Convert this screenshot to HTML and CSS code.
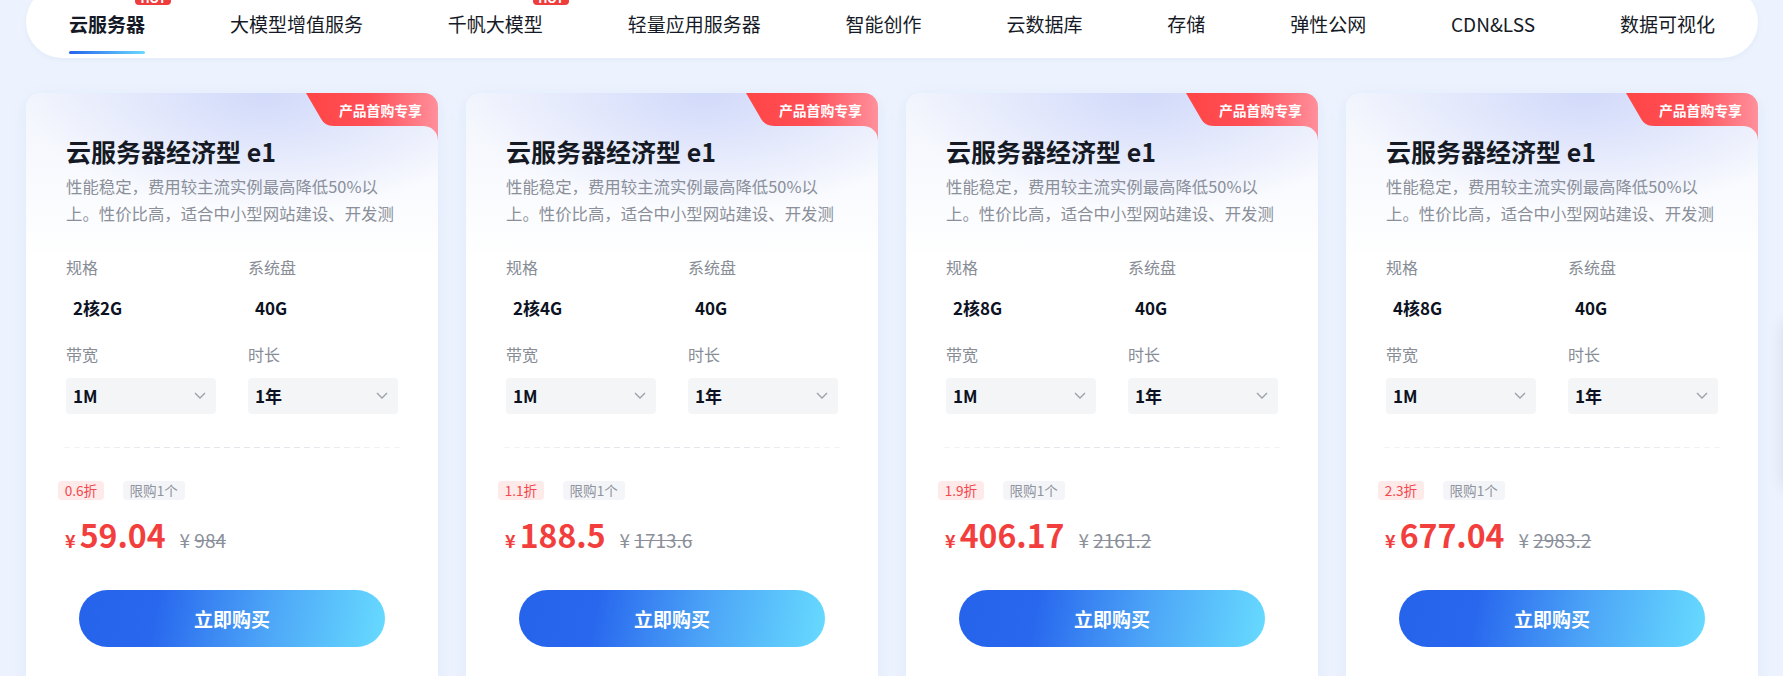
FILE: index.html
```html
<!DOCTYPE html>
<html lang="zh-CN">
<head>
<meta charset="utf-8">
<title>云服务器</title>
<link rel="stylesheet" href="styles.css">
</head>
<body>
<div class="page">
  <nav class="nav">
    <div class="nav-item active"><span class="nav-text">云服务器</span><span class="underline"></span><span class="hot">HOT</span></div>
    <div class="nav-item"><span class="nav-text">大模型增值服务</span></div>
    <div class="nav-item"><span class="nav-text">千帆大模型</span><span class="hot">HOT</span></div>
    <div class="nav-item"><span class="nav-text">轻量应用服务器</span></div>
    <div class="nav-item"><span class="nav-text">智能创作</span></div>
    <div class="nav-item"><span class="nav-text">云数据库</span></div>
    <div class="nav-item"><span class="nav-text">存储</span></div>
    <div class="nav-item"><span class="nav-text">弹性公网</span></div>
    <div class="nav-item"><span class="nav-text">CDN&amp;LSS</span></div>
    <div class="nav-item"><span class="nav-text">数据可视化</span></div>
  </nav>

  <div class="cards">
    <div class="card">
      <div class="badge">
        <svg class="badge-bg" viewBox="0 0 132 48" width="132" height="48"><defs><linearGradient id="bg1" x1="0" y1="0" x2="1" y2="0"><stop offset="0" stop-color="#ff4545"/><stop offset="0.5" stop-color="#ff5058"/><stop offset="1" stop-color="#ff909c"/></linearGradient></defs><path d="M0 0 H132 V48 C132 39 126 33 116 33 H28 C21 33 17 30 14 24 Z" fill="url(#bg1)"/></svg>
        <span class="badge-text">产品首购专享</span>
      </div>
      <h2 class="title">云服务器经济型 e1</h2>
      <p class="desc">性能稳定，费用较主流实例最高降低50%以上。性价比高，适合中小型网站建设、开发测</p>
      <div class="specs">
        <div class="col">
          <div class="label">规格</div>
          <div class="value">2核2G</div>
          <div class="label label2">带宽</div>
          <div class="select"><span>1M</span><svg class="chev" width="12" height="7" viewBox="0 0 12 7"><polyline points="1,1 6,6 11,1" fill="none" stroke="#9a9ea6" stroke-width="1.3"/></svg></div>
        </div>
        <div class="col">
          <div class="label">系统盘</div>
          <div class="value">40G</div>
          <div class="label label2">时长</div>
          <div class="select"><span>1年</span><svg class="chev" width="12" height="7" viewBox="0 0 12 7"><polyline points="1,1 6,6 11,1" fill="none" stroke="#9a9ea6" stroke-width="1.3"/></svg></div>
        </div>
      </div>
      <div class="divider"></div>
      <div class="tags"><span class="tag tag-red">0.6折</span><span class="tag tag-gray">限购1个</span></div>
      <div class="price-row"><span class="yen">¥</span><span class="price">59.04</span><span class="orig">¥ <s>984</s></span></div>
      <button class="buy">立即购买</button>
    </div>

    <div class="card">
      <div class="badge">
        <svg class="badge-bg" viewBox="0 0 132 48" width="132" height="48"><defs><linearGradient id="bg2" x1="0" y1="0" x2="1" y2="0"><stop offset="0" stop-color="#ff4545"/><stop offset="0.5" stop-color="#ff5058"/><stop offset="1" stop-color="#ff909c"/></linearGradient></defs><path d="M0 0 H132 V48 C132 39 126 33 116 33 H28 C21 33 17 30 14 24 Z" fill="url(#bg2)"/></svg>
        <span class="badge-text">产品首购专享</span>
      </div>
      <h2 class="title">云服务器经济型 e1</h2>
      <p class="desc">性能稳定，费用较主流实例最高降低50%以上。性价比高，适合中小型网站建设、开发测</p>
      <div class="specs">
        <div class="col">
          <div class="label">规格</div>
          <div class="value">2核4G</div>
          <div class="label label2">带宽</div>
          <div class="select"><span>1M</span><svg class="chev" width="12" height="7" viewBox="0 0 12 7"><polyline points="1,1 6,6 11,1" fill="none" stroke="#9a9ea6" stroke-width="1.3"/></svg></div>
        </div>
        <div class="col">
          <div class="label">系统盘</div>
          <div class="value">40G</div>
          <div class="label label2">时长</div>
          <div class="select"><span>1年</span><svg class="chev" width="12" height="7" viewBox="0 0 12 7"><polyline points="1,1 6,6 11,1" fill="none" stroke="#9a9ea6" stroke-width="1.3"/></svg></div>
        </div>
      </div>
      <div class="divider"></div>
      <div class="tags"><span class="tag tag-red">1.1折</span><span class="tag tag-gray">限购1个</span></div>
      <div class="price-row"><span class="yen">¥</span><span class="price">188.5</span><span class="orig">¥ <s>1713.6</s></span></div>
      <button class="buy">立即购买</button>
    </div>

    <div class="card">
      <div class="badge">
        <svg class="badge-bg" viewBox="0 0 132 48" width="132" height="48"><defs><linearGradient id="bg3" x1="0" y1="0" x2="1" y2="0"><stop offset="0" stop-color="#ff4545"/><stop offset="0.5" stop-color="#ff5058"/><stop offset="1" stop-color="#ff909c"/></linearGradient></defs><path d="M0 0 H132 V48 C132 39 126 33 116 33 H28 C21 33 17 30 14 24 Z" fill="url(#bg3)"/></svg>
        <span class="badge-text">产品首购专享</span>
      </div>
      <h2 class="title">云服务器经济型 e1</h2>
      <p class="desc">性能稳定，费用较主流实例最高降低50%以上。性价比高，适合中小型网站建设、开发测</p>
      <div class="specs">
        <div class="col">
          <div class="label">规格</div>
          <div class="value">2核8G</div>
          <div class="label label2">带宽</div>
          <div class="select"><span>1M</span><svg class="chev" width="12" height="7" viewBox="0 0 12 7"><polyline points="1,1 6,6 11,1" fill="none" stroke="#9a9ea6" stroke-width="1.3"/></svg></div>
        </div>
        <div class="col">
          <div class="label">系统盘</div>
          <div class="value">40G</div>
          <div class="label label2">时长</div>
          <div class="select"><span>1年</span><svg class="chev" width="12" height="7" viewBox="0 0 12 7"><polyline points="1,1 6,6 11,1" fill="none" stroke="#9a9ea6" stroke-width="1.3"/></svg></div>
        </div>
      </div>
      <div class="divider"></div>
      <div class="tags"><span class="tag tag-red">1.9折</span><span class="tag tag-gray">限购1个</span></div>
      <div class="price-row"><span class="yen">¥</span><span class="price">406.17</span><span class="orig">¥ <s>2161.2</s></span></div>
      <button class="buy">立即购买</button>
    </div>

    <div class="card">
      <div class="badge">
        <svg class="badge-bg" viewBox="0 0 132 48" width="132" height="48"><defs><linearGradient id="bg4" x1="0" y1="0" x2="1" y2="0"><stop offset="0" stop-color="#ff4545"/><stop offset="0.5" stop-color="#ff5058"/><stop offset="1" stop-color="#ff909c"/></linearGradient></defs><path d="M0 0 H132 V48 C132 39 126 33 116 33 H28 C21 33 17 30 14 24 Z" fill="url(#bg4)"/></svg>
        <span class="badge-text">产品首购专享</span>
      </div>
      <h2 class="title">云服务器经济型 e1</h2>
      <p class="desc">性能稳定，费用较主流实例最高降低50%以上。性价比高，适合中小型网站建设、开发测</p>
      <div class="specs">
        <div class="col">
          <div class="label">规格</div>
          <div class="value">4核8G</div>
          <div class="label label2">带宽</div>
          <div class="select"><span>1M</span><svg class="chev" width="12" height="7" viewBox="0 0 12 7"><polyline points="1,1 6,6 11,1" fill="none" stroke="#9a9ea6" stroke-width="1.3"/></svg></div>
        </div>
        <div class="col">
          <div class="label">系统盘</div>
          <div class="value">40G</div>
          <div class="label label2">时长</div>
          <div class="select"><span>1年</span><svg class="chev" width="12" height="7" viewBox="0 0 12 7"><polyline points="1,1 6,6 11,1" fill="none" stroke="#9a9ea6" stroke-width="1.3"/></svg></div>
        </div>
      </div>
      <div class="divider"></div>
      <div class="tags"><span class="tag tag-red">2.3折</span><span class="tag tag-gray">限购1个</span></div>
      <div class="price-row"><span class="yen">¥</span><span class="price">677.04</span><span class="orig">¥ <s>2983.2</s></span></div>
      <button class="buy">立即购买</button>
    </div>
  </div>
</div>
<div class="float-edge"></div>
</body>
</html>
```
FILE: styles.css
```css
* { box-sizing: border-box; margin: 0; padding: 0; }
html, body { width: 1783px; height: 676px; overflow: hidden; }
body {
  background: #edf3fe;
  font-family: "Noto Sans CJK SC", "Noto Sans", sans-serif;
  color: #151a26;
}
.page { padding: 0 25px 0 26px; }

/* nav */
.nav {
  margin-top: -14px;
  height: 72px;
  background: #fff;
  border-radius: 36px;
  display: flex;
  justify-content: space-between;
  padding: 0 43px;
  box-shadow: 0 2px 6px rgba(40, 80, 160, 0.05);
}
.nav-item {
  position: relative;
  padding-top: 24px;
  display: flex;
  flex-direction: column;
  align-items: stretch;
  white-space: nowrap;
}
.nav-text { font-size: 19px; line-height: 28px; color: #151a26; }
.active .nav-text { font-weight: 700; }
.underline {
  margin-top: 12.5px;
  height: 3px;
  border-radius: 2px;
  background: linear-gradient(90deg, #2563eb, #6ad9ff);
}
.hot {
  position: absolute;
  left: calc(100% - 10px);
  top: 3.3px;
  width: 36px;
  height: 16px;
  padding-top: 4px;
  background: #ef3d3d;
  border-radius: 3px 3px 4px 4px;
  color: #fff;
  font-size: 12px;
  line-height: 12px;
  font-weight: 700;
  text-align: center;
  overflow: hidden;
  font-family: "Noto Sans", sans-serif;
}

/* cards */
.cards {
  display: grid;
  grid-template-columns: repeat(4, 412px);
  gap: 28px;
  margin-top: 34.5px;
}
.card {
  position: relative;
  height: 640px;
  border-radius: 14px;
  overflow: hidden;
  padding: 41.5px 40px 0;
  background:
    radial-gradient(ellipse 240px 120px at 58% 0%, rgba(208, 216, 250, 0.95), rgba(255, 255, 255, 0) 100%),
    linear-gradient(180deg, #f2f5fd 0%, #ffffff 170px);
  box-shadow: 0 4px 18px rgba(40, 90, 190, 0.07);
}
.badge {
  position: absolute;
  top: 0;
  right: 0;
  width: 132px;
  height: 48px;
}
.badge-bg { position: absolute; left: 0; top: 0; display: block; }
.badge-text {
  position: relative;
  display: block;
  padding-left: 33px;
  width: 132px;
  height: 33px;
  line-height: 34px;
  font-size: 13.8px;
  font-weight: 700;
  color: #fff;
  white-space: nowrap;
}
.title {
  font-size: 25px;
  line-height: 34px;
  font-weight: 700;
  color: #141923;
}
.desc {
  margin-top: 4.75px;
  font-size: 16.4px;
  line-height: 27.5px;
  height: 55px;
  color: #8a8f99;
}
.specs {
  display: grid;
  grid-template-columns: 150px 150px;
  column-gap: 32px;
  margin-top: 28px;
}
.label { font-size: 16px; line-height: 22px; color: #878c95; }
.label2 { margin-top: 18.2px; }
.value {
  margin-top: 11.5px;
  height: 36px;
  padding-left: 7px;
  font-size: 17px;
  font-weight: 700;
  color: #0d1222;
  display: flex;
  align-items: center;
}
.select {
  margin-top: 12.3px;
  height: 36px;
  background: #f3f5f6;
  border-radius: 4px;
  display: flex;
  align-items: center;
  justify-content: space-between;
  padding: 0 10px 0 7px;
  font-size: 17px;
  font-weight: 700;
  color: #0d1222;
}
.chev { display: block; }
.divider {
  margin: 33px -2px 0;
  height: 1px;
  background: repeating-linear-gradient(90deg, #e2e5ea 0 6px, transparent 6px 10px);
  -webkit-mask-image: linear-gradient(90deg, rgba(0,0,0,0.4), #000 30%, #000 70%, rgba(0,0,0,0.4));
  mask-image: linear-gradient(90deg, rgba(0,0,0,0.4), #000 30%, #000 70%, rgba(0,0,0,0.4));
}
.tags {
  margin: 33.4px 0 0 -8px;
  display: flex;
  gap: 19px;
}
.tag {
  height: 18.5px;
  line-height: 18.5px;
  font-size: 13.6px;
  padding: 0 6.7px;
  border-radius: 4px;
  white-space: nowrap;
}
.tag-red { background: #ffeaea; color: #f2474d; }
.tag-gray { background: #f4f5f8; color: #8e939c; }
.price-row {
  display: flex;
  align-items: baseline;
  margin-top: 14.8px;
  height: 40px;
}
.yen {
  font-size: 18px;
  line-height: 18px;
  font-weight: 700;
  color: #f23f3d;
  margin-left: -1px;
}
.price {
  margin-left: 4px;
  font-size: 32px;
  line-height: 40px;
  font-weight: 700;
  color: #f23f3d;
}
.orig {
  margin-left: 14px;
  font-size: 19px;
  line-height: 19px;
  color: #8a8f99;
}
.orig s { text-decoration: line-through; text-decoration-thickness: 1.4px; }
.buy {
  display: block;
  margin: 35.4px auto 0;
  width: 306px;
  height: 57px;
  border: none;
  border-radius: 28.5px;
  background: linear-gradient(100deg, #2563eb 0%, #2867ee 25%, #4da6f7 62%, #67dbff 100%);
  color: #fff;
  font-family: "Noto Sans CJK SC", sans-serif;
  font-size: 19px;
  font-weight: 700;
  letter-spacing: 0;
}

.float-edge {
  position: fixed;
  left: 1786px;
  top: 320px;
  width: 60px;
  height: 170px;
  background: #fff;
  border-radius: 8px;
  box-shadow: 0 0 18px rgba(0, 0, 0, 0.14);
}
```
